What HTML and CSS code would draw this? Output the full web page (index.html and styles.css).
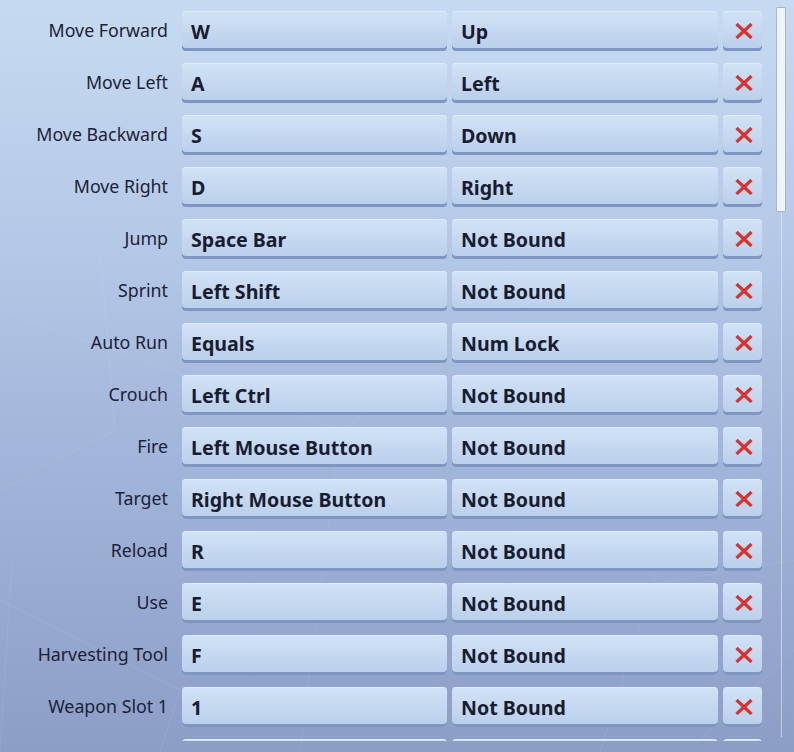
FILE: index.html
```html
<!DOCTYPE html>
<html lang="en">
<head>
<meta charset="utf-8">
<title>Keybinds</title>
<link rel="stylesheet" href="styles.css">
</head>
<body>
<svg class="bg-lines" width="794" height="752" viewBox="0 0 794 752" aria-hidden="true">
  <g stroke="#ffffff" stroke-opacity="0.08" stroke-width="1" fill="none">
    <line x1="0" y1="310" x2="340" y2="430"/>
    <line x1="100" y1="250" x2="115" y2="430"/>
    <line x1="340" y1="430" x2="300" y2="752"/>
    <line x1="0" y1="490" x2="115" y2="430"/>
    <line x1="340" y1="430" x2="540" y2="300"/>
    <line x1="0" y1="600" x2="180" y2="690"/>
    <line x1="180" y1="690" x2="160" y2="752"/>
    <line x1="560" y1="600" x2="794" y2="560"/>
    <line x1="600" y1="752" x2="660" y2="560"/>
    <line x1="700" y1="740" x2="794" y2="650"/>
    <line x1="12" y1="560" x2="0" y2="752"/>
  </g>
</svg>
<div class="panel">
  <div class="list">
    <div class="row"><div class="label">Move Forward</div><div class="key">W</div><div class="key alt">Up</div><div class="clear"><svg width="18" height="16" viewBox="0 0 18 16"><path d="M1.5 1 L16.5 15 M16.5 1 L1.5 15"/></svg></div></div>
    <div class="row"><div class="label">Move Left</div><div class="key">A</div><div class="key alt">Left</div><div class="clear"><svg width="18" height="16" viewBox="0 0 18 16"><path d="M1.5 1 L16.5 15 M16.5 1 L1.5 15"/></svg></div></div>
    <div class="row"><div class="label">Move Backward</div><div class="key">S</div><div class="key alt">Down</div><div class="clear"><svg width="18" height="16" viewBox="0 0 18 16"><path d="M1.5 1 L16.5 15 M16.5 1 L1.5 15"/></svg></div></div>
    <div class="row"><div class="label">Move Right</div><div class="key">D</div><div class="key alt">Right</div><div class="clear"><svg width="18" height="16" viewBox="0 0 18 16"><path d="M1.5 1 L16.5 15 M16.5 1 L1.5 15"/></svg></div></div>
    <div class="row"><div class="label">Jump</div><div class="key">Space Bar</div><div class="key alt">Not Bound</div><div class="clear"><svg width="18" height="16" viewBox="0 0 18 16"><path d="M1.5 1 L16.5 15 M16.5 1 L1.5 15"/></svg></div></div>
    <div class="row"><div class="label">Sprint</div><div class="key">Left Shift</div><div class="key alt">Not Bound</div><div class="clear"><svg width="18" height="16" viewBox="0 0 18 16"><path d="M1.5 1 L16.5 15 M16.5 1 L1.5 15"/></svg></div></div>
    <div class="row"><div class="label">Auto Run</div><div class="key">Equals</div><div class="key alt">Num Lock</div><div class="clear"><svg width="18" height="16" viewBox="0 0 18 16"><path d="M1.5 1 L16.5 15 M16.5 1 L1.5 15"/></svg></div></div>
    <div class="row"><div class="label">Crouch</div><div class="key">Left Ctrl</div><div class="key alt">Not Bound</div><div class="clear"><svg width="18" height="16" viewBox="0 0 18 16"><path d="M1.5 1 L16.5 15 M16.5 1 L1.5 15"/></svg></div></div>
    <div class="row"><div class="label">Fire</div><div class="key">Left Mouse Button</div><div class="key alt">Not Bound</div><div class="clear"><svg width="18" height="16" viewBox="0 0 18 16"><path d="M1.5 1 L16.5 15 M16.5 1 L1.5 15"/></svg></div></div>
    <div class="row"><div class="label">Target</div><div class="key">Right Mouse Button</div><div class="key alt">Not Bound</div><div class="clear"><svg width="18" height="16" viewBox="0 0 18 16"><path d="M1.5 1 L16.5 15 M16.5 1 L1.5 15"/></svg></div></div>
    <div class="row"><div class="label">Reload</div><div class="key">R</div><div class="key alt">Not Bound</div><div class="clear"><svg width="18" height="16" viewBox="0 0 18 16"><path d="M1.5 1 L16.5 15 M16.5 1 L1.5 15"/></svg></div></div>
    <div class="row"><div class="label">Use</div><div class="key">E</div><div class="key alt">Not Bound</div><div class="clear"><svg width="18" height="16" viewBox="0 0 18 16"><path d="M1.5 1 L16.5 15 M16.5 1 L1.5 15"/></svg></div></div>
    <div class="row"><div class="label">Harvesting Tool</div><div class="key">F</div><div class="key alt">Not Bound</div><div class="clear"><svg width="18" height="16" viewBox="0 0 18 16"><path d="M1.5 1 L16.5 15 M16.5 1 L1.5 15"/></svg></div></div>
    <div class="row"><div class="label">Weapon Slot 1</div><div class="key">1</div><div class="key alt">Not Bound</div><div class="clear"><svg width="18" height="16" viewBox="0 0 18 16"><path d="M1.5 1 L16.5 15 M16.5 1 L1.5 15"/></svg></div></div>
    <div class="row"><div class="label"></div><div class="key"></div><div class="key alt"></div><div class="clear"></div></div>
  </div>
  <div class="scroll">
    <div class="thumb"></div>
    <div class="track"></div>
  </div>
</div>
</body>
</html>
```

FILE: styles.css
```css
html, body {
  margin: 0;
  padding: 0;
}
body {
  width: 794px;
  height: 752px;
  overflow: hidden;
  position: relative;
  background: linear-gradient(180deg, #c6daf1 0%, #b6cae8 30%, #a2b5da 60%, #8d9ec6 100%);
  font-family: "Noto Sans", "Open Sans", sans-serif;
}
.bg-lines {
  position: absolute;
  left: 0;
  top: 0;
  z-index: 0;
}
.panel {
  position: relative;
  z-index: 1;
  display: flex;
  align-items: flex-start;
  height: 752px;
}
.list {
  margin-top: 11px;
  height: 730px;
  overflow: hidden;
  width: 762px;
  flex: none;
}
.row {
  display: flex;
  align-items: stretch;
  height: 40px;
  margin-bottom: 12px;
}
.label {
  width: 168px;
  margin-right: 14px;
  text-align: right;
  font-size: 17.8px;
  color: #1c2238;
  line-height: 38px;
  white-space: nowrap;
}
.key {
  width: 265px;
  box-sizing: border-box;
  padding-left: 9px;
  margin-right: 5px;
  border-radius: 4px;
  background: linear-gradient(180deg, #d1e2f5 0%, #b9ceeb 100%);
  box-shadow: inset 0 -3px 0 #7f96c0, inset 0 1px 0 rgba(255,255,255,0.35);
  font-weight: 700;
  font-size: 19.6px;
  color: #181c31;
  line-height: 41px;
  white-space: nowrap;
}
.key.alt {
  width: 266px;
}
.clear {
  width: 39px;
  border-radius: 4px;
  background: linear-gradient(180deg, #d1e2f5 0%, #b9ceeb 100%);
  box-shadow: inset 0 -3px 0 #7f96c0, inset 0 1px 0 rgba(255,255,255,0.35);
  display: flex;
  align-items: center;
  justify-content: center;
  padding-left: 3px;
  padding-bottom: 1px;
  box-sizing: border-box;
}
.clear svg path {
  stroke: #d8312f;
  stroke-width: 3.2;
  fill: none;
}
.scroll {
  margin-left: 14px;
  padding-top: 7px;
  width: 10px;
  display: flex;
  flex-direction: column;
  align-items: center;
}
.thumb {
  width: 10px;
  height: 205px;
  box-sizing: border-box;
  background: #eef4fc;
  border: 1px solid #a7b6cf;
  border-radius: 1px;
}
.track {
  width: 1px;
  height: 525px;
  background: rgba(235, 242, 252, 0.55);
}
```
